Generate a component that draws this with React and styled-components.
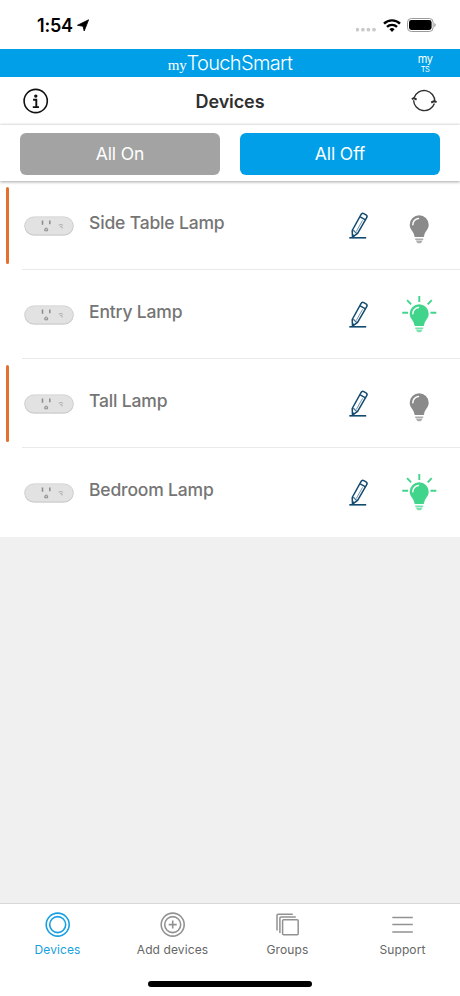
import React from 'react'
import styled, { createGlobalStyle } from 'styled-components'

const GlobalStyle = createGlobalStyle`
    * {
        box-sizing: border-box;
    }
    body {
        margin: 0;
        background: #fff;
        font-family: Inter, 'Liberation Sans', sans-serif;
    }
    svg {
        display: block;
        flex: none;
    }
    button {
        font-family: inherit;
        border: 0;
        padding: 0;
        background: none;
    }
`
const Screen = styled.div`
    display: flex;
    flex-direction: column;
    width: 460px;
    height: 996px;
    overflow: hidden;
    background: #f0f0f0;
`
const StatusBar = styled.div`
    display: flex;
    align-items: center;
    justify-content: space-between;
    height: 49px;
    padding: 1px 24px 0 37px;
    background: #fff;
`
const Time = styled.div`
    display: flex;
    align-items: center;
    gap: 4px;
    font-size: 18px;
    font-weight: 600;
    letter-spacing: -0.2px;
    color: #000;
`
const StatusIcons = styled.div`
    display: flex;
    align-items: center;
    gap: 6px;
`
const BrandBar = styled.div`
    display: grid;
    grid-template-columns: 60px 1fr 60px;
    align-items: center;
    height: 28px;
    background: #009fe8;
    color: #fff;
`
const Brand = styled.div`
    grid-column: 2;
    display: flex;
    align-items: baseline;
    justify-content: center;
    white-space: nowrap;
    padding-top: 1px;
    line-height: 27px;
    font-weight: 300;
    font-size: 20px;
    letter-spacing: -0.65px;
`
const BrandMy = styled.span`
    font-family: 'Liberation Serif', serif;
    font-size: 15px;
    font-weight: 400;
    letter-spacing: -0.2px;
`
const Monogram = styled.div`
    display: flex;
    flex-direction: column;
    align-items: center;
    width: 16px;
    margin-left: 17px;
    font-size: 11px;
    line-height: 10px;
    letter-spacing: -0.6px;
`
const MonogramSub = styled.small`
    padding-top: 1px;
    font-size: 7.5px;
    line-height: 9px;
    letter-spacing: -0.5px;
`
const TitleBar = styled.header`
    display: flex;
    align-items: center;
    justify-content: space-between;
    height: 48px;
    padding: 0 23px 0 23px;
    background: #fff;
`
const Title = styled.h1`
    margin: 0;
    font-size: 18px;
    font-weight: 600;
    letter-spacing: -0.1px;
    color: #303030;
`
const Actions = styled.div`
    position: relative;
    display: grid;
    grid-template-columns: 1fr 1fr;
    gap: 20px;
    height: 56px;
    padding: 8px 20px 6px;
    background: #fff;
    box-shadow: 0 1px 3px rgba(0, 0, 0, 0.35), 0 -1px 2px rgba(0, 0, 0, 0.08);
`
const ActionButton = styled.button`
    padding-bottom: 2px;
    border-radius: 6px;
    background: ${p => (p.$primary ? '#009fe8' : '#a3a3a3')};
    color: #fff;
    font-size: 17.5px;
    letter-spacing: -0.1px;
`
const List = styled.main`
    flex: 1;
`
const Row = styled.div`
    display: flex;
    height: 89px;
    padding-left: 6px;
    background: #fff;
`
const Marker = styled.div`
    width: 3px;
    height: 77px;
    margin: 6px 13px 0 0;
    border-radius: 2px;
    background: ${p => (p.$active ? '#e3702d' : 'transparent')};
`
const RowBody = styled.div`
    display: flex;
    flex: 1;
    padding-right: 23px;
    padding-left: 2px;
    border-bottom: 1px solid ${p => (p.$last ? 'transparent' : '#e9e9e9')};
`
const PlugSlot = styled.div`
    width: 65px;
    padding-top: 35px;
`
const DeviceName = styled.div`
    flex: 1;
    padding-top: 31px;
    font-size: 17.5px;
    font-weight: 500;
    line-height: 22px;
    letter-spacing: -0.16px;
    color: #757575;
`
const PencilSlot = styled.div`
    width: 53px;
    padding-top: 31px;
`
const BulbSlot = styled.div`
    padding-top: 25px;
`
const TabBar = styled.nav`
    display: grid;
    grid-template-columns: repeat(4, 1fr);
    height: 72px;
    border-top: 1px solid #d8d8d8;
    background: #fff;
`
const Tab = styled.button`
    display: flex;
    flex-direction: column;
    align-items: center;
    padding-top: 8px;
    gap: 4px;
    font-size: 12px;
    line-height: 16px;
    letter-spacing: 0.1px;
    color: ${p => (p.$active ? '#179fe0' : '#666')};
`
const HomeArea = styled.div`
    display: flex;
    justify-content: center;
    height: 21px;
    padding-top: 6px;
    background: #fff;
`
const HomeIndicator = styled.div`
    width: 164px;
    height: 6px;
    border-radius: 3px;
    background: #000;
`

const LocationArrow = () => (
    <svg width="12" height="13" viewBox="0 0 12 13">
        <path d="M11.6.8 7.2 12 6 7.2.4 6.3z" fill="#000" stroke="#000" strokeWidth=".8" strokeLinejoin="round" />
    </svg>
)

const SignalDots = () => (
    <svg width="21" height="14" viewBox="0 0 21 14">
        {[2, 7.6, 13.1, 18.7].map(x => (
            <circle key={x} cx={x - 0.7} cy="11.7" r="1.9" fill="#cacaca" />
        ))}
    </svg>
)

const Wifi = () => (
    <svg width="18" height="13" viewBox="0 0 18 13">
        <g fill="none" stroke="#000" strokeWidth="2.4">
            <path d="M1 4.7a11.4 11.4 0 0 1 16 0" />
            <path d="M4 7.9a7.2 7.2 0 0 1 10 0" />
        </g>
        <path d="M9 13 6.4 10.3a3.8 3.8 0 0 1 5.2 0z" fill="#000" />
    </svg>
)

const Battery = () => (
    <svg width="29" height="14" viewBox="0 0 29 14">
        <rect x=".5" y=".5" width="25.6" height="13" rx="3.8" fill="none" stroke="#999" />
        <rect x="2" y="2" width="22.6" height="10" rx="2.4" fill="#000" />
        <path d="M27.3 5v4.2q1.4-.7 1.4-2.1T27.3 5" fill="#999" />
    </svg>
)

const InfoIcon = () => (
    <svg width="26" height="26" viewBox="0 0 26 26" fill="none" stroke="#111">
        <circle cx="12.7" cy="13" r="11.6" strokeWidth="1.6" />
        <circle cx="12.8" cy="8.1" r="1.7" fill="#111" stroke="none" />
        <path d="M10.1 11.7h3.2v7.2M9.8 19.1H16" strokeWidth="1.9" />
    </svg>
)

const RefreshIcon = () => (
    <svg width="26" height="24" viewBox="0 0 26 24" fill="none" stroke="#303030" strokeWidth="1.4">
        <path d="M2.9 9a10.7 10.7 0 0 1 20.9 3.6M23.4 14.4A10.7 10.7 0 0 1 2.6 11.2" />
        <path d="m.8 10.2 2.2-1 2.6 1.5M25.6 13.1l-2.4-.9-3 1.3" strokeWidth="2" />
    </svg>
)

const Plug = () => (
    <svg width="50" height="20" viewBox="0 0 50 20">
        <rect x=".5" y=".8" width="49" height="18.7" rx="9.3" fill="#bdbdbd" />
        <rect x=".8" y=".9" width="48.4" height="17.8" rx="8.9" fill="#e2e2e2" stroke="#d2d2d2" strokeWidth=".6" />
        <path d="M18.5 4.5v4.3M25.8 4.5v3.8" stroke="#8b8b8b" strokeWidth="1.5" />
        <path d="M20.8 14.8v-2q1.4-1.7 2.8 0v2z" fill="#c8c8c8" stroke="#888" strokeWidth=".9" />
        <path d="M34.8 9.3q2.1-1.7 4.1 0M36 10.9q1-.8 1.9 0" fill="none" stroke="#b2b2b2" strokeWidth="1.1" />
        <circle cx="38" cy="11.6" r=".9" fill="#bbb" />
    </svg>
)

const Pencil = () => (
    <svg width="20" height="27" viewBox="0 0 20 27" fill="none" stroke="#124a70" strokeWidth="1.5" strokeLinejoin="round">
        <path d="M3.2 18.5 12 2.6q1-1.9 2.8-.9l2.2 1.2q1.7 1 .7 2.8L8.6 21.4l-5.1 3.7z" />
        <path d="m11.2 4.8 5.3 3" strokeWidth="1.4" />
        <path d="m3.4 18.7 2.2.2.6 1.7 2.2.8" strokeWidth="1" />
        <path d="M13.6 8.3 7.2 19.6" strokeWidth=".6" />
        <path d="M.3 25.8h16.9" strokeWidth="1.6" />
        <path d="m3.5 22 2.7 1.5-2.7 1.8z" fill="#124a70" stroke="none" />
    </svg>
)

const Bulb = ({ on }) => (
    <svg width="35" height="38" viewBox="0 0 35 38" fill={on ? '#41d58c' : '#8a8a8a'}>
        <path d="M17.2 9.3a9.5 9.5 0 0 0-9.5 9.5c0 5.1 4.2 6.5 4.7 11.5q.1.8.9.8h7.9q.8 0 .9-.8c.5-5 4.6-6.4 4.6-11.5a9.5 9.5 0 0 0-9.5-9.5z" />
        <path d="M10.8 18.8a6.3 6.3 0 0 1 5.7-6.4" fill="none" stroke="#fff" strokeWidth="1.5" strokeLinecap="round" />
        <path d="M13.2 32.4h8v1.5h-8zM13.8 34.6h6.8l-1 1.6q-.3.6-1 1h-2.8q-.7-.4-1-1z" opacity=".7" />
        {on && (
            <path
                d="M17.3.9v6M5.1 5.2l4 4.2M29.7 5.2l-4 4.2M.3 17.7h5.8M28.5 17.7h5.8"
                fill="none"
                stroke="#41d58c"
                strokeWidth="1.9"
            />
        )}
    </svg>
)

const DevicesIcon = ({ plus }) => (
    <svg width="26" height="26" viewBox="0 0 26 26" fill="none" stroke="currentColor" strokeWidth="1.6">
        <circle cx="12.7" cy="12.6" r="11.5" />
        <circle cx="12.7" cy="12.6" r="8" />
        {plus && <path d="M12.7 8.6v8M8.7 12.6h8" />}
    </svg>
)

const GroupsIcon = () => (
    <svg width="26" height="26" viewBox="0 0 26 26" fill="none" stroke="currentColor" strokeWidth="1.5">
        <rect x="7.6" y="7.8" width="15.6" height="15" rx="1" />
        <path d="M4.9 21V6.1q0-1 1-1h14.9M2 18.4V3.4q0-1.2 1.2-1.2h14.6" />
    </svg>
)

const MenuIcon = () => (
    <svg width="26" height="26" viewBox="0 0 26 26" stroke="currentColor" strokeWidth="1.5">
        <path d="M2.3 5.4h20.5M2.3 12.6h20.5M2.3 19.9h20.5" />
    </svg>
)

const TabIcon = styled.span`
    color: ${p => (p.$active ? '#179fe0' : '#929292')};
`

const devices = [
    { name: 'Side Table Lamp', on: false },
    { name: 'Entry Lamp', on: true },
    { name: 'Tall Lamp', on: false },
    { name: 'Bedroom Lamp', on: true },
]

const tabs = [
    { label: 'Devices', icon: <DevicesIcon />, active: true },
    { label: 'Add devices', icon: <DevicesIcon plus /> },
    { label: 'Groups', icon: <GroupsIcon /> },
    { label: 'Support', icon: <MenuIcon /> },
]

export default function App() {
    return (
        <Screen>
            <GlobalStyle />
            <StatusBar>
                <Time>1:54 <LocationArrow /></Time>
                <StatusIcons>
                    <SignalDots />
                    <Wifi />
                    <Battery />
                </StatusIcons>
            </StatusBar>
            <BrandBar>
                <Brand><BrandMy>my</BrandMy>TouchSmart</Brand>
                <Monogram>my<MonogramSub>TS</MonogramSub></Monogram>
            </BrandBar>
            <TitleBar>
                <InfoIcon />
                <Title>Devices</Title>
                <RefreshIcon />
            </TitleBar>
            <Actions>
                <ActionButton>All On</ActionButton>
                <ActionButton $primary>All Off</ActionButton>
            </Actions>
            <List>
                {devices.map((device, i) => (
                    <Row key={device.name}>
                        <Marker $active={!device.on} />
                        <RowBody $last={i === devices.length - 1}>
                            <PlugSlot><Plug /></PlugSlot>
                            <DeviceName>{device.name}</DeviceName>
                            <PencilSlot><Pencil /></PencilSlot>
                            <BulbSlot><Bulb on={device.on} /></BulbSlot>
                        </RowBody>
                    </Row>
                ))}
            </List>
            <TabBar>
                {tabs.map(tab => (
                    <Tab key={tab.label} $active={tab.active}>
                        <TabIcon $active={tab.active}>{tab.icon}</TabIcon>
                        {tab.label}
                    </Tab>
                ))}
            </TabBar>
            <HomeArea>
                <HomeIndicator />
            </HomeArea>
        </Screen>
    )
}
